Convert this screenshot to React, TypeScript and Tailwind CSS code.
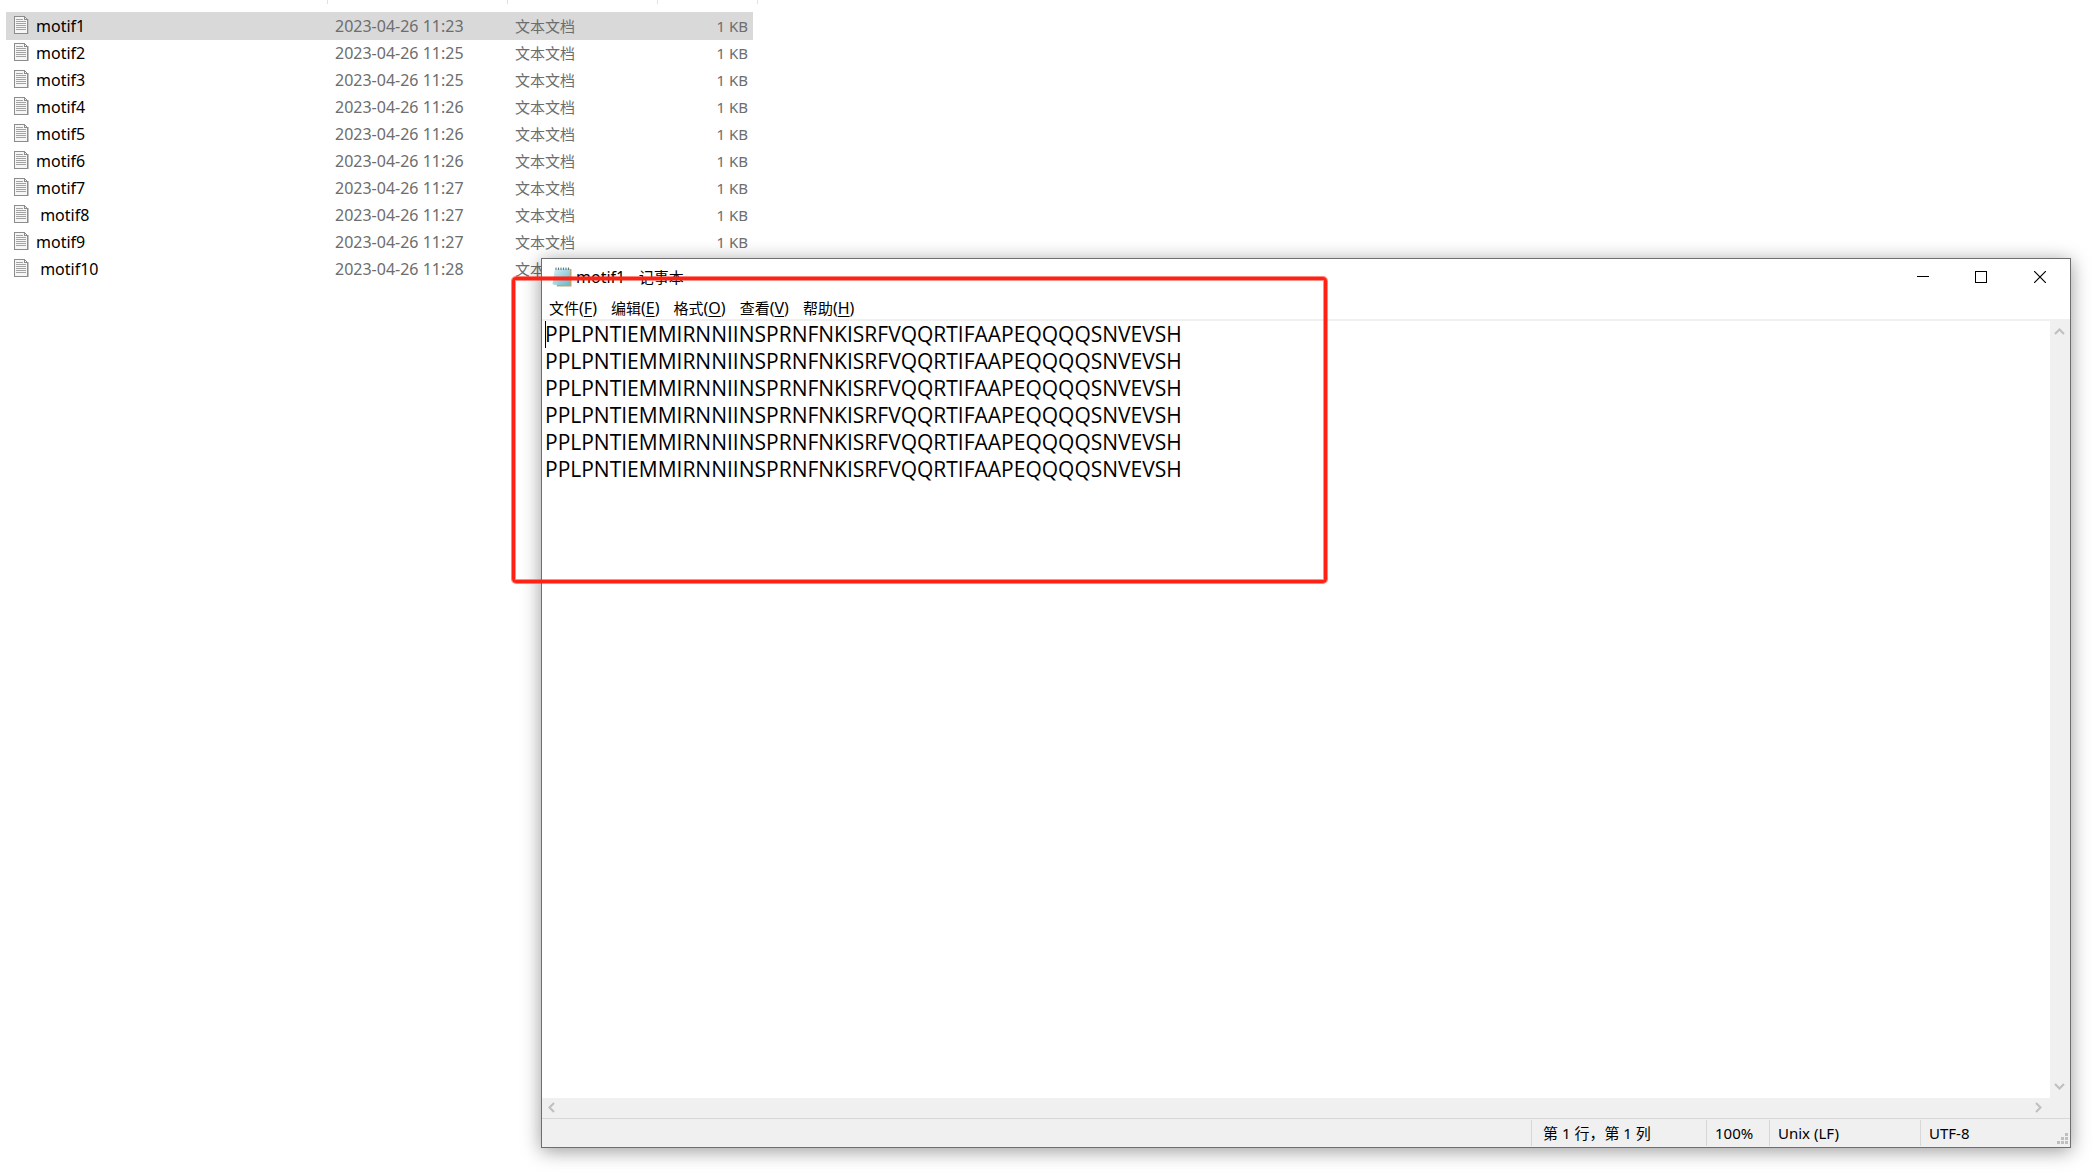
import React from "react";

const files = [
  { name: "motif1", date: "2023-04-26 11:23" },
  { name: "motif2", date: "2023-04-26 11:25" },
  { name: "motif3", date: "2023-04-26 11:25" },
  { name: "motif4", date: "2023-04-26 11:26" },
  { name: "motif5", date: "2023-04-26 11:26" },
  { name: "motif6", date: "2023-04-26 11:26" },
  { name: "motif7", date: "2023-04-26 11:27" },
  { name: " motif8", date: "2023-04-26 11:27" },
  { name: "motif9", date: "2023-04-26 11:27" },
  { name: " motif10", date: "2023-04-26 11:28" },
];

const sequence = "PPLPNTIEMMIRNNIINSPRNFNKISRFVQQRTIFAAPEQQQQSNVEVSH";
const content = Array(6).fill(sequence).join("\n");

const menus = [
  ["文件", "F"],
  ["编辑", "E"],
  ["格式", "O"],
  ["查看", "V"],
  ["帮助", "H"],
];

function DocIcon() {
  return (
    <svg width="15" height="18" viewBox="0 0 15 18" shapeRendering="crispEdges" aria-hidden="true">
      <path d="M0.5 0.5H10.5L13.5 3.5V17.5H0.5Z" fill="#f6f6f6" stroke="#8c8c8c" />
      <path d="M14.5 3V18" stroke="#c4c4c4" />
      <path d="M10.5 0.5V3.5H13.5" fill="none" stroke="#8c8c8c" />
      <path d="M2 3.5H9M2 5.5H12M2 7.5H12M2 9.5H12M2 11.5H12M2 13.5H12" stroke="#a3a3a3" />
    </svg>
  );
}

function NotepadIcon() {
  return (
    <svg width="20" height="20" viewBox="0 0 20 20" aria-hidden="true">
      <defs>
        <linearGradient id="pad" x1="0" y1="0" x2="1" y2="1">
          <stop offset="0" stopColor="#d8f0f5" />
          <stop offset="1" stopColor="#6bb7cb" />
        </linearGradient>
      </defs>
      <path d="M5 2H19.5V19.5H5Z" fill="#b9a77c" />
      <path d="M3 1.500H18L17.500 18H5L0.500 17Z" fill="url(#pad)" />
      <path d="M0.500 17L5 15V18.500Z" fill="#a9d5e0" />
      <path d="M4 0.500V3M6.500 0.500V3M9 0.500V3M11.500 0.500V3M14 0.500V3M16.500 0.500V3" stroke="#6f7678" />
    </svg>
  );
}

function Chevron({ d }: { d: string }) {
  return (
    <svg width="11" height="11" viewBox="0 0 11 11" fill="none" stroke="#bfbfbf" strokeWidth="2" aria-hidden="true">
      <path d={d} />
    </svg>
  );
}

function FileList() {
  return (
    <div className="max-w-[758px]">
      <div className="mb-2 flex h-1 pl-1.5">
        <div className="w-[322px] border-r border-[#e2e2e2]" />
        <div className="w-[180px] border-r border-[#e2e2e2]" />
        <div className="w-[150px] border-r border-[#e2e2e2]" />
        <div className="w-[100px] border-r border-[#e2e2e2]" />
      </div>
      <table className="ml-1.5 w-[747px] table-fixed border-collapse text-[15px] leading-[26px] text-[#6d6d6d]">
        <tbody>
          {files.map((f, i) => (
            <tr key={f.name} className={i === 0 ? "h-[27px] bg-[#d9d9d9] shadow-[0_1px_0_#d9d9d9]" : "h-[27px]"}>
              <td className="w-[321px] p-0 text-[16px] leading-[26px] text-black">
                <div className="flex items-start gap-[7px] pl-2">
                  <span className="pt-1">
                    <DocIcon />
                  </span>
                  <span className="whitespace-pre pt-px">{f.name}</span>
                </div>
              </td>
              <td className="w-[180px] p-0 pl-2 pt-px text-[16px] leading-[26px]">{f.date}</td>
              <td className="w-[150px] p-0 pl-2 pt-px">文本文档</td>
              <td className="p-0 pr-[5px] pt-px text-right">1 KB</td>
            </tr>
          ))}
        </tbody>
      </table>
    </div>
  );
}

function NotepadWindow() {
  return (
    <section className="absolute bottom-[27px] left-[541px] right-[29px] top-[258px] flex flex-col border border-[#6e6e6e] bg-white text-black shadow-[0_3px_18px_rgba(0,0,0,0.4)]">
      <header className="flex h-9 items-center">
        <div className="flex flex-1 items-center gap-1 pl-[10px]">
          <NotepadIcon />
          <h1 className="text-[16px]">
            motif1 - <span className="text-[15px]">记事本</span>
          </h1>
        </div>
        <button aria-label="最小化" className="flex w-[58px] justify-center">
          <svg width="12" height="12" viewBox="0 0 12 12" stroke="#000" shapeRendering="crispEdges"><path d="M0 5.5H12" /></svg>
        </button>
        <button aria-label="最大化" className="flex w-[58px] justify-center">
          <svg width="12" height="12" viewBox="0 0 12 12" fill="none" stroke="#000" shapeRendering="crispEdges"><path d="M0.5 0.5H11.5V11.5H0.5Z" /></svg>
        </button>
        <button aria-label="关闭" className="flex w-[60px] justify-center">
          <svg width="12" height="12" viewBox="0 0 12 12" stroke="#000" strokeWidth="1.2"><path d="M0 0L12 12M12 0L0 12" /></svg>
        </button>
      </header>
      <nav className="flex h-[26px] items-center gap-[14px] border-b-2 border-[#f0f0f0] pl-[7px] pt-0.5 text-[15px]">
        {menus.map(([label, key]) => (
          <button key={key}>
            {label}
            <span className="text-[16px]">
              (<span className="underline underline-offset-2">{key}</span>)
            </span>
          </button>
        ))}
      </nav>
      <div className="flex min-h-0 flex-1">
        <div className="relative flex-1">
          <textarea
            aria-label="文本"
            spellCheck={false}
            wrap="off"
            defaultValue={content}
            className="block h-full w-full resize-none overflow-hidden pl-[3px] font-['Open_Sans',sans-serif] text-[21px] leading-[27px] outline-none"
          />
          <div className="absolute left-[3px] top-0 h-[27px] w-px bg-black" />
        </div>
        <div className="flex w-5 flex-col items-center justify-between bg-[#f0f0f0] pb-[6px] pr-px pt-[5px]">
          <button aria-label="向上滚动"><Chevron d="M1 8L5.500 3.500L10 8" /></button>
          <button aria-label="向下滚动"><Chevron d="M1 3L5.500 7.500L10 3" /></button>
        </div>
      </div>
      <div className="flex h-5 items-center justify-between bg-[#f0f0f0] pb-px pl-1 pr-[26px]">
        <button aria-label="向左滚动"><Chevron d="M8 1L3.500 5.500L8 10" /></button>
        <button aria-label="向右滚动"><Chevron d="M3 1L7.500 5.500L3 10" /></button>
      </div>
      <footer className="relative flex h-[29px] justify-end border-t border-[#d7d7d7] bg-[#f0f0f0] text-[15px]">
        <div className="mb-px mt-px flex leading-[26px]">
          <div className="w-[175px] border-l border-[#d7d7d7] pl-[11px]">第 1 行，第 1 列</div>
          <div className="w-[63px] border-l border-[#d7d7d7] pl-2">100%</div>
          <div className="w-[151px] border-l border-[#d7d7d7] pl-2">Unix (LF)</div>
          <div className="w-[150px] border-l border-[#d7d7d7] pl-2">UTF-8</div>
        </div>
        <svg className="absolute bottom-[3px] right-[2px]" width="11" height="11" viewBox="0 0 11 11" fill="#bfbfbf" shapeRendering="crispEdges" aria-hidden="true">
          <path d="M8 0h3v3h-3zM4 4h3v3h-3zM8 4h3v3h-3zM0 8h3v3h-3zM4 8h3v3h-3zM8 8h3v3h-3z" />
        </svg>
      </footer>
    </section>
  );
}

export default function App() {
  return (
    <main className="relative min-h-screen overflow-hidden bg-white font-['Noto_Sans','Noto_Sans_CJK_SC',sans-serif]">
      <FileList />
      <NotepadWindow />
      <div className="pointer-events-none absolute left-[512px] top-[277px] h-[306px] w-[815px] rounded-[4px] border-[3px] border-[#ff2214] shadow-[0_0_0_1px_rgba(255,34,20,0.55),inset_0_0_0_1px_rgba(255,34,20,0.5)]" />
    </main>
  );
}
